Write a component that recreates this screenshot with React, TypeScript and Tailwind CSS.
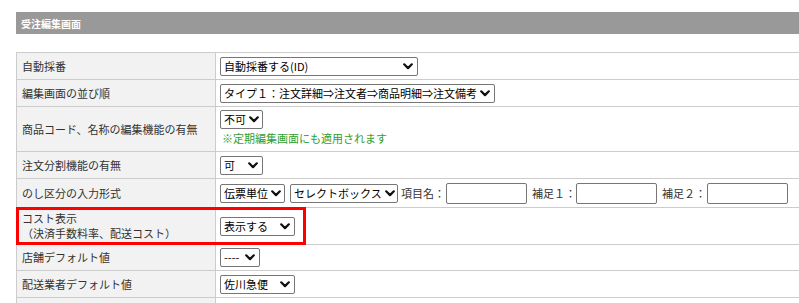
import React from "react";

const Chevron = () => (
  <svg width="10" height="7" viewBox="0 0 10 7" className="shrink-0">
    <path d="M1.2 1.3 L5 5.1 L8.8 1.3" fill="none" stroke="#111" strokeWidth="2.2" strokeLinecap="round" strokeLinejoin="round" />
  </svg>
);

function Sel({ text, w }: { text: string; w: string }) {
  return (
    <div className={`${w} h-[19px] inline-flex items-center justify-between gap-[3px] border border-[#767676] rounded-[2px] bg-white pl-[3px] pr-[4px] text-black whitespace-nowrap overflow-hidden`}>
      <span className="leading-none">{text}</span>
      <Chevron />
    </div>
  );
}

function Inp() {
  return <div className="w-[81px] h-[21px] border border-[#767676] rounded-[2px] bg-white" />;
}

function Row({ h, label, children }: { h: string; label: React.ReactNode; children?: React.ReactNode }) {
  return (
    <div className={`flex ${h} border-b border-[#cccccc]`}>
      <div className="w-[199px] shrink-0 bg-[#f2f2f2] border-r border-[#cccccc] pl-[5px] flex items-center text-[#333] leading-[15px]">
        {label}
      </div>
      <div className="flex-1 pl-[4px] flex items-center">{children}</div>
    </div>
  );
}

export default function App() {
  return (
    <div
      className="w-[799px] h-[303px] overflow-hidden bg-white text-[11px]"
      style={{ fontFamily: '"Noto Sans CJK JP", "Noto Sans", sans-serif' }}
    >
      <div className="pt-[12px] pl-[16px]">
        <div className="h-[22px] bg-[#999999] text-white font-bold text-[10px] pl-[5px] flex items-center">
          受注編集画面
        </div>
        <div className="relative mt-[18px] border-l border-t border-[#cccccc] w-[800px]">
          <Row h="h-[27px]" label="自動採番">
            <Sel text="自動採番する(ID)" w="w-[198px]" />
          </Row>
          <Row h="h-[27px]" label="編集画面の並び順">
            <Sel text="タイプ１：注文詳細⇒注文者⇒商品明細⇒注文備考" w="w-auto" />
          </Row>
          <Row h="h-[45px]" label="商品コード、名称の編集機能の有無">
            <div className="flex flex-col items-start gap-[2px] -mt-[3px]">
              <Sel text="不可" w="w-[43px]" />
              <span className="text-[#2f9e2f] leading-[14px] pl-[2px]">※定期編集画面にも適用されます</span>
            </div>
          </Row>
          <Row h="h-[27px]" label="注文分割機能の有無">
            <Sel text="可" w="w-[43px]" />
          </Row>
          <Row h="h-[29px]" label="のし区分の入力形式">
            <div className="flex items-center text-[#333]">
              <Sel text="伝票単位" w="w-[65px]" />
              <div className="w-[5px]" />
              <Sel text="セレクトボックス" w="w-[108px]" />
              <span className="ml-[3px] mr-[1px]">項目名：</span>
              <Inp />
              <span className="ml-[5px]">補足１：</span>
              <Inp />
              <span className="ml-[5px] mr-[1px]">補足２：</span>
              <Inp />
            </div>
          </Row>
          <Row
            h="h-[37px]"
            label={
              <div className="flex flex-col">
                <span>コスト表示</span>
                <span>（決済手数料率、配送コスト）</span>
              </div>
            }
          >
            <Sel text="表示する" w="w-[75px]" />
          </Row>
          <Row h="h-[26px]" label="店舗デフォルト値">
            <Sel text="----" w="w-[40px]" />
          </Row>
          <Row h="h-[27px]" label="配送業者デフォルト値">
            <Sel text="佐川急便" w="w-[75px]" />
          </Row>
          <Row h="h-[27px]" label="">
            <div className="self-start mt-[4px]">
              <Sel text="" w="w-[95px]" />
            </div>
          </Row>
          <div className="absolute left-[-1px] top-[154px] w-[290px] h-[38px] border-[3px] border-[#ff0000] pointer-events-none" />
        </div>
      </div>
    </div>
  );
}
